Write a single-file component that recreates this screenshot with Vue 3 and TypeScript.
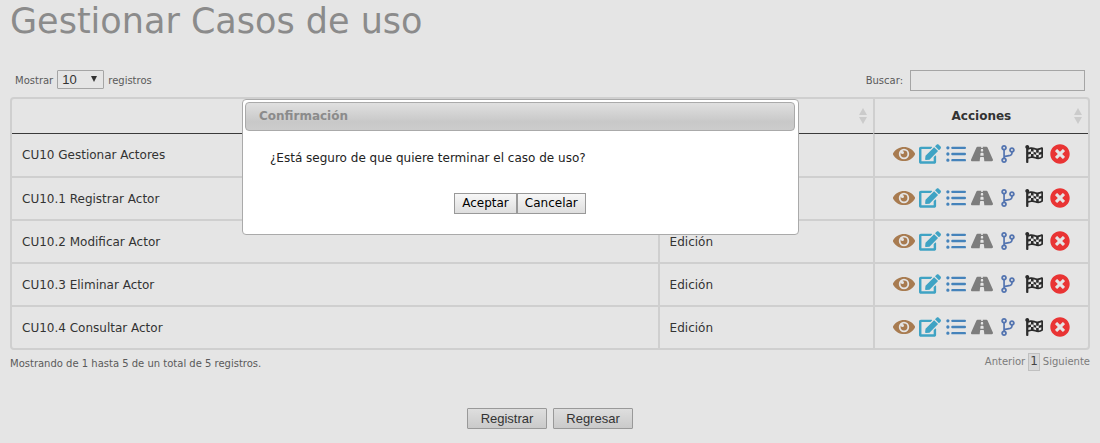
<script setup lang="ts">
import { ref } from 'vue'

interface UseCase {
  name: string
  state: string
}

interface Action {
  label: string
  box: string
  width: number
  height: number
  color: string
  path: string
}

const pageSize = ref('10')
const search = ref('')

const useCases: UseCase[] = [
  { name: 'CU10 Gestionar Actores', state: 'Edición' },
  { name: 'CU10.1 Registrar Actor', state: 'Edición' },
  { name: 'CU10.2 Modificar Actor', state: 'Edición' },
  { name: 'CU10.3 Eliminar Actor', state: 'Edición' },
  { name: 'CU10.4 Consultar Actor', state: 'Edición' },
]

const actions: Action[] = [
  {
    label: 'Consultar',
    box: '0 0 576 512',
    width: 22,
    height: 20,
    color: '#a87b50',
    path: 'M569.354 231.631C512.969 135.949 407.81 72 288 72 168.14 72 63.004 135.994 6.646 231.631a47.999 47.999 0 0 0 0 48.739C63.031 376.051 168.19 440 288 440c119.86 0 224.996-63.994 281.354-159.631a47.997 47.997 0 0 0 0-48.738zM288 392a136 136 0 0 1 0-272a136 136 0 0 1 0 272zm90-136a90 90 0 0 1-180 0c0-14 4-28 10-40a40 40 0 1 0 40-40c12-7 26-10 40-10a90 90 0 0 1 90 90z',
  },
  {
    label: 'Modificar',
    box: '0 0 576 512',
    width: 22,
    height: 20,
    color: '#3fa3c4',
    path: 'M402.6 83.2l90.2 90.2c3.8 3.8 3.8 10 0 13.8L274.4 405.6l-92.8 10.3c-12.4 1.4-22.9-9.1-21.5-21.5l10.3-92.8L388.8 83.2c3.8-3.8 10-3.8 13.8 0zm162-22.9l-48.8-48.8c-15.2-15.2-39.9-15.2-55.2 0l-35.4 35.4c-3.8 3.8-3.8 10 0 13.8l90.2 90.2c3.8 3.8 10 3.8 13.8 0l35.4-35.4c15.2-15.3 15.2-40 0-55.2zM384 346.2V448H64V128h229.8c3.2 0 6.2-1.3 8.5-3.5l40-40c7.6-7.6 2.2-20.5-8.5-20.5H48C21.5 64 0 85.5 0 112v352c0 26.5 21.5 48 48 48h352c26.5 0 48-21.5 48-48V306.2c0-10.7-12.9-16-20.5-8.5l-40 40c-2.2 2.3-3.5 5.3-3.5 8.5z',
  },
  {
    label: 'Trayectorias',
    box: '0 0 512 512',
    width: 20,
    height: 20,
    color: '#4583bb',
    path: 'M48 56a42 42 0 1 1 0 84a42 42 0 1 1 0-84zM48 214a42 42 0 1 1 0 84a42 42 0 1 1 0-84zM48 372a42 42 0 1 1 0 84a42 42 0 1 1 0-84zM160 68h326a26 30 0 0 1 0 60H160a26 30 0 0 1 0-60zM160 226h326a26 30 0 0 1 0 60H160a26 30 0 0 1 0-60zM160 384h326a26 30 0 0 1 0 60H160a26 30 0 0 1 0-60z',
  },
  {
    label: 'Caminos',
    box: '0 0 576 512',
    width: 22,
    height: 20,
    color: '#7d7d7d',
    path: 'M573.19 402.67l-139.79-320C428.43 71.29 417.6 64 405.68 64h-97.59l2.45 23.16c.5 4.72-3.21 8.84-7.96 8.84h-29.16c-4.75 0-8.46-4.12-7.96-8.84L267.91 64h-97.59c-11.93 0-22.76 7.29-27.73 18.67L2.8 402.67C-6.45 423.86 8.31 448 30.54 448h196.84l10.31-97.68c.86-8.14 7.72-14.32 15.91-14.32h68.8c8.19 0 15.05 6.18 15.91 14.32L348.62 448h196.84c22.23 0 36.99-24.14 27.73-45.33zM260.4 135.16a8 8 0 0 1 7.96-7.16h39.29c4.09 0 7.53 3.09 7.96 7.16l4.6 43.58c.75 7.09-4.81 13.26-11.93 13.26h-40.54c-7.13 0-12.68-6.17-11.93-13.26l4.59-43.58zM315.64 304h-55.29c-9.5 0-16.91-8.23-15.91-17.68l5.07-48c.86-8.14 7.72-14.32 15.91-14.32h45.15c8.19 0 15.05 6.18 15.91 14.32l5.07 48c1 9.45-6.41 17.68-15.91 17.68z',
  },
  {
    label: 'Extensiones',
    box: '0 0 384 512',
    width: 14,
    height: 18,
    color: '#5374b0',
    path: 'M384 144c0-44.2-35.8-80-80-80s-80 35.8-80 80c0 36.4 24.3 67.1 57.5 76.8-.6 16.1-4.2 28.5-11 36.9-15.4 19.2-49.3 22.4-85.2 25.7-28.2 2.6-57.4 5.4-81.3 16.9v-144c32.5-10.2 56-40.5 56-76.3 0-44.2-35.8-80-80-80S0 35.8 0 80c0 35.8 23.5 66.1 56 76.3v199.3C23.5 365.9 0 396.2 0 432c0 44.2 35.8 80 80 80s80-35.8 80-80c0-34-21.2-63.1-51.2-74.6 3.1-5.2 7.8-9.8 14.9-13.4 16.2-8.2 40.4-10.4 66.1-12.8 42.2-3.9 90-8.4 118.2-43.4 14-17.4 21.1-39.8 21.6-67.9 31.6-10.8 54.4-40.7 54.4-75.9zM80 52a28 28 0 1 1 0 56a28 28 0 1 1 0-56zM80 404a28 28 0 1 1 0 56a28 28 0 1 1 0-56zM304 116a28 28 0 1 1 0 56a28 28 0 1 1 0-56z',
  },
  {
    label: 'Terminar',
    box: '0 0 512 512',
    width: 18,
    height: 18,
    color: '#2b2b2b',
    path: 'M466.515 66.928C487.731 57.074 512 72.551 512 95.944v243.1c0 10.526-5.161 20.407-13.843 26.358-35.837 24.564-74.335 40.858-122.505 40.858-67.373 0-111.63-34.783-165.217-34.783-50.853 0-86.124 10.058-114.435 22.122V488c0 13.255-10.745 24-24 24H56c-13.255 0-24-10.745-24-24V101.945C17.497 91.825 8 75.026 8 56 8 24.296 34.345-1.254 66.338.048c28.468 1.158 51.779 23.968 53.551 52.404.52 8.342-.81 16.31-3.586 23.562C137.039 68.384 159.393 64 184.348 64c67.373 0 111.63 34.783 165.217 34.783 40.496 0 82.612-15.906 116.95-31.855zM96 134.63v70.49c29-10.67 51.18-17.83 73.6-20.91v-71.57c-23.5 2.17-40.44 9.79-73.6 21.99zm220.8 9.19c-26.417-4.672-49.886-13.979-73.6-21.34v67.42c24.175 6.706 47.566 16.444 73.6 22.31v-68.39zm-147.2 40.39v70.04c32.796-2.978 53.91-.635 73.6 3.8V189.9c-25.247-7.035-46.581-9.423-73.6-5.69zm73.6 142.23c26.338 4.652 49.732 13.927 73.6 21.34v-67.41c-24.277-6.746-47.54-16.45-73.6-22.32v68.39zM96 342.1c23.62-8.39 47.79-13.84 73.6-16.56v-71.29c-26.11 2.35-47.36 8.04-73.6 17.36v70.49zm368-221.6c-21.3 8.85-46.59 17.64-73.6 22.47v71.91c27.31-4.36 50.03-14.1 73.6-23.89V120.5zm0 209.96v-70.49c-22.19 14.2-48.78 22.61-73.6 26.02v71.58c25.07-2.38 48.49-11.04 73.6-27.11zM316.8 212.21v68.16c25.664 7.134 46.616 9.342 73.6 5.62v-71.11c-25.999 4.187-49.943 2.676-73.6-2.67z',
  },
  {
    label: 'Eliminar',
    box: '0 0 512 512',
    width: 20,
    height: 20,
    color: '#e93434',
    path: 'M256 8C119 8 8 119 8 256s111 248 248 248 248-111 248-248S393 8 256 8zm121.6 313.1c4.7 4.7 4.7 12.3 0 17L338 377.6c-4.7 4.7-12.3 4.7-17 0L256 312l-65.1 65.6c-4.7 4.7-12.3 4.7-17 0L134.4 338c-4.7-4.7-4.7-12.3 0-17l65.6-65-65.6-65.1c-4.7-4.7-4.7-12.3 0-17l39.6-39.6c4.7-4.7 12.3-4.7 17 0l65 65.7 65.1-65.6c4.7-4.7 12.3-4.7 17 0l39.6 39.6c4.7 4.7 4.7 12.3 0 17L312 256l65.6 65.1z',
  },
]
</script>

<template>
  <main class="page">
    <h1>Gestionar Casos de uso</h1>

    <div class="toolbar">
      <div class="length">
        <label for="page-size">Mostrar</label>
        <span class="select-wrap">
          <select id="page-size" v-model="pageSize">
            <option>10</option>
            <option>25</option>
            <option>50</option>
          </select>
          <svg class="caret" viewBox="0 0 8 7" aria-hidden="true"><path d="M1 0h6L4 6z" /></svg>
        </span>
        <label for="page-size">registros</label>
      </div>
      <div class="filter">
        <label for="search">Buscar:</label>
        <input id="search" v-model="search" type="text" />
      </div>
    </div>

    <div class="frame">
      <table>
        <colgroup>
          <col class="col-name" />
          <col class="col-state" />
          <col class="col-actions" />
        </colgroup>
        <thead>
          <tr>
            <th scope="col" aria-label="Caso de uso"></th>
            <th scope="col" aria-label="Estado">
              <svg class="sort" viewBox="0 0 10 16" aria-hidden="true"><path d="M5 0l4 7H1zM1 9h8l-4 7z" /></svg>
            </th>
            <th scope="col">
              Acciones
              <svg class="sort" viewBox="0 0 10 16" aria-hidden="true"><path d="M5 0l4 7H1zM1 9h8l-4 7z" /></svg>
            </th>
          </tr>
        </thead>
        <tbody>
          <tr v-for="item in useCases" :key="item.name">
            <td>{{ item.name }}</td>
            <td>{{ item.state }}</td>
            <td class="actions-cell">
              <div class="actions">
                <a v-for="action in actions" :key="action.label" href="#" :aria-label="action.label">
                  <svg
                    :viewBox="action.box"
                    :width="action.width"
                    :height="action.height"
                    :fill="action.color"
                    aria-hidden="true"
                  >
                    <path :d="action.path" />
                  </svg>
                </a>
              </div>
            </td>
          </tr>
        </tbody>
      </table>
    </div>

    <div class="summary">
      <p>Mostrando de 1 hasta 5 de un total de 5 registros.</p>
      <nav class="pager" aria-label="Páginas">
        <a href="#">Anterior</a>
        <a href="#" class="current" aria-current="page">1</a>
        <a href="#">Siguiente</a>
      </nav>
    </div>

    <div class="page-buttons">
      <button type="button">Registrar</button>
      <button type="button">Regresar</button>
    </div>

    <section class="dialog" role="dialog" aria-modal="true" aria-labelledby="dialog-title">
      <h2 id="dialog-title">Confirmación</h2>
      <p>¿Está seguro de que quiere terminar el caso de uso?</p>
      <div class="dialog-buttons">
        <button type="button">Aceptar</button>
        <button type="button">Cancelar</button>
      </div>
    </section>
  </main>
</template>

<style>
html {
  background: #e5e5e5;
}
body {
  margin: 0;
}
</style>

<style scoped>
.page {
  position: relative;
  padding: 0 10px 14px;
  font-family: "DejaVu Sans", Verdana, sans-serif;
  font-size: 12px;
  color: #333;
}
h1 {
  margin: 0;
  font-size: 35px;
  font-weight: 400;
  line-height: 42px;
  color: #8b8b8b;
}
.toolbar {
  display: flex;
  justify-content: space-between;
  align-items: flex-start;
  padding: 28px 5px 5px;
  font-size: 10px;
  line-height: 22px;
  color: #5a5a5a;
}
.length {
  display: flex;
  gap: 4px;
}
.filter {
  display: flex;
  gap: 7px;
}
.select-wrap {
  position: relative;
  display: flex;
  align-items: flex-start;
}
select {
  appearance: none;
  width: 47px;
  height: 19px;
  margin: 0;
  padding: 0 4px;
  border: 1px solid #a5a5a5;
  border-radius: 1px;
  background: transparent;
  font: 13px/17px "Liberation Sans", Arial, sans-serif;
  color: #333;
}
.caret {
  position: absolute;
  right: 6px;
  top: 6px;
  width: 8px;
  height: 7px;
  fill: #333;
  pointer-events: none;
}
input {
  box-sizing: border-box;
  width: 175px;
  height: 21px;
  padding: 1px 4px;
  border: 1px solid #a5a5a5;
  background: transparent;
  font: 13px "Liberation Sans", Arial, sans-serif;
}
.frame {
  border: 2px solid #cfcfcf;
  border-radius: 4px;
}
table {
  width: 100%;
  table-layout: fixed;
  border-spacing: 0;
}
.col-name {
  width: 60%;
}
.col-state,
.col-actions {
  width: 20%;
}
th,
td {
  box-sizing: border-box;
  border-left: 2px solid #cfcfcf;
}
th:first-child,
td:first-child {
  border-left: 0;
}
th {
  position: relative;
  height: 35px;
  padding: 0 10px;
  border-bottom: 1px solid #3a3a3a;
  line-height: 16px;
}
td {
  height: 43px;
  padding: 0 10px;
  border-bottom: 2px solid #cfcfcf;
  line-height: 16px;
}
tbody tr:first-child td {
  height: 44px;
}
tbody tr:last-child td {
  height: 41px;
  border-bottom: 0;
}
.sort {
  position: absolute;
  right: 5px;
  top: 9px;
  width: 10px;
  height: 16px;
  fill: #cbcbcb;
}
td.actions-cell {
  padding: 0 0 2px;
}
.actions {
  display: flex;
  justify-content: center;
  padding-left: 1px;
}
.actions a {
  display: flex;
  justify-content: center;
  align-items: center;
  width: 26px;
}
.summary {
  display: flex;
  justify-content: space-between;
  align-items: flex-start;
  padding-top: 3px;
  font-size: 10px;
  color: #5a5a5a;
}
.summary p {
  margin: 0;
  line-height: 22px;
}
.pager {
  display: flex;
  gap: 3px;
  line-height: 18px;
}
.pager a {
  color: #7b7b7b;
  text-decoration: none;
}
.pager .current {
  padding: 0 1px;
  border: 1px solid #c0c0c0;
  background: #d9d9d9;
  font-size: 12px;
  line-height: 15px;
  color: #444;
}
.page-buttons {
  display: flex;
  justify-content: center;
  gap: 6px;
  padding-top: 33px;
}
button {
  box-sizing: border-box;
  height: 21px;
  margin: 0;
  padding: 0 7px;
  border: 1px solid #999;
  background: linear-gradient(#f7f7f7, #dedede);
  font: 12px/19px "DejaVu Sans", Verdana, sans-serif;
  color: #000;
}
.page-buttons button {
  width: 80px;
  border-radius: 1px;
  background: linear-gradient(#dedede, #cacaca);
  font: 13px/19px "Liberation Sans", Arial, sans-serif;
  color: #333;
}
.dialog {
  position: absolute;
  left: 22%;
  top: 99px;
  box-sizing: border-box;
  width: 557px;
  padding: 2px 3px 20px 2px;
  border: 1px solid #aaa;
  border-radius: 4px;
  background: #fff;
  color: #222;
}
.dialog h2 {
  margin: 0;
  padding: 0 13px;
  border: 1px solid #aaa;
  border-radius: 4px;
  background: linear-gradient(#e0e0e0, #c8c8c8 70%, #cccccc);
  font-size: 12px;
  line-height: 27px;
  color: #8b8b8b;
}
.dialog p {
  margin: 0;
  padding: 19px 25px 26px;
  line-height: 17px;
}
.dialog-buttons {
  display: flex;
  justify-content: center;
}
</style>
